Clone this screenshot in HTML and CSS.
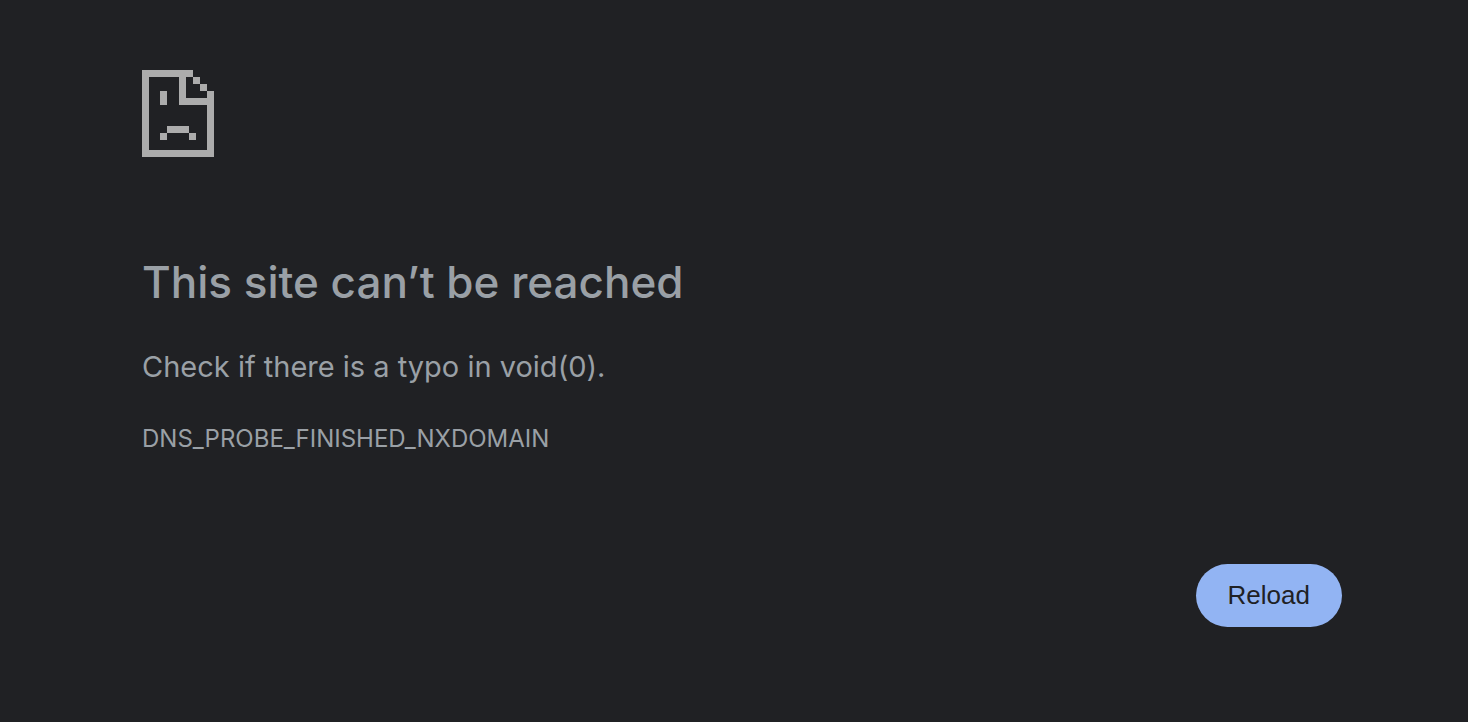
FILE: index.html
```html
<!DOCTYPE html>
<html lang="en">
<head>
<meta charset="utf-8">
<meta name="viewport" content="width=device-width, initial-scale=1">
<title>This site can’t be reached</title>
<link rel="stylesheet" href="styles.css">
</head>
<body>
<main class="error-page">
  <svg class="error-icon" viewBox="0 0 72 87" aria-hidden="true">
    <path d="M0 0H51V7H44V28H65V21H72V87H0ZM7 7V80H65V35H37V7Z" fill-rule="evenodd"/>
    <path d="M51 7h7v7h-7zM58 14h7v7h-7zM18 21h7v14h-7zM25 56h22v7H25zM18 63h7v7h-7zM47 63h7v7h-7z"/>
  </svg>
  <h1 class="error-title">This site can’t be reached</h1>
  <p class="error-summary">Check if there is a typo in void(0).</p>
  <p class="error-code">DNS_PROBE_FINISHED_NXDOMAIN</p>
  <div class="error-actions">
    <button class="reload-button" type="button">Reload</button>
  </div>
</main>
</body>
</html>
```
FILE: styles.css
```css
* {
  box-sizing: border-box;
}

body {
  margin: 0;
  background: #202124;
  color: #9aa0a6;
  font-family: Inter, "Liberation Sans", sans-serif;
}

.error-page {
  padding: 70px 126px 40px 142px;
}

.error-icon {
  display: block;
  width: 72px;
  height: 87px;
  fill: #acacac;
  shape-rendering: crispEdges;
}

.error-title {
  margin: 96px 0 32px;
  font-size: 44px;
  font-weight: 500;
  line-height: 58px;
}

.error-summary {
  margin: 0 0 32px;
  font-size: 29px;
  line-height: 48px;
}

.error-code {
  margin: 0;
  font-size: 24px;
  line-height: 32px;
}

.error-actions {
  display: flex;
  justify-content: flex-end;
  margin-top: 109px;
}

.reload-button {
  padding: 16px 32px;
  border: 0;
  border-radius: 32px;
  background: #92b4f3;
  color: #202124;
  font-family: "Liberation Sans", Arial, sans-serif;
  font-size: 26px;
  line-height: 31px;
  cursor: pointer;
}
```
